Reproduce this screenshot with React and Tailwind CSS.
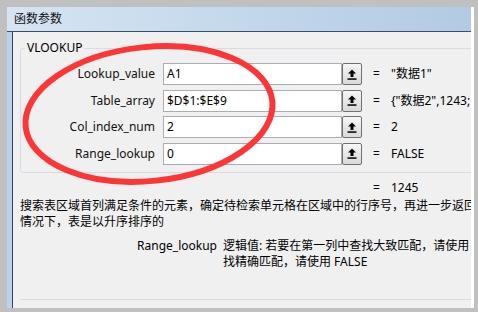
const rows = [
  { label: "Lookup_value", input: "A1", value: '"数据1"' },
  { label: "Table_array", input: "$D$1:$E$9", value: '{"数据2",1243;' },
  { label: "Col_index_num", input: "2", value: "2" },
  { label: "Range_lookup", input: "0", value: "FALSE" },
]

function PickButton() {
  return (
    <div className="w-[20px] h-[22px] shrink-0 border border-[#707070] rounded-[2px] bg-gradient-to-b from-[#f6f6f6] to-[#dadada] flex items-center justify-center">
      <svg width="10" height="11" viewBox="0 0 10 11">
        <path d="M5 0.5 L9 4.5 L6.5 4.5 L6.5 8 L3.5 8 L3.5 4.5 L1 4.5 Z" fill="#000" />
        <rect x="0.5" y="9.3" width="9" height="1.5" fill="#000" />
      </svg>
    </div>
  )
}

export default function App() {
  return (
    <div className="relative w-[478px] h-[312px] overflow-hidden bg-[#c0c0c0] pt-[7px] pl-[7px] font-['Noto_Sans','Noto_Sans_CJK_SC',sans-serif] text-[12px] text-black">
      <div className="flex">
        {/* dialog window */}
        <div className="w-[464px] h-[301px] flex flex-col overflow-hidden">
          {/* title bar */}
          <div className="h-[25px] shrink-0 bg-gradient-to-r from-[#d6e4f2] via-[#c4d8ec] to-[#b2cae3] border-b border-[#3e4e60] flex items-center pl-[7px]">
            <span className="leading-none text-[#111]">函数参数</span>
          </div>

          <div className="flex flex-1">
            <div className="w-[5px] bg-[#bad2ea] shrink-0" />
            <div className="w-px bg-[#33445a] shrink-0" />

            {/* content */}
            <div className="flex-1 bg-[#f0f0f0] overflow-hidden">
              {/* group box */}
              <div className="relative ml-[7px] mt-[16px] w-[480px] h-[125px] border border-[#d3dde7] rounded-[3px] pt-[14px]">
                <span className="absolute -top-[10px] left-[4px] px-[2px] bg-[#f0f0f0] leading-[18px]">VLOOKUP</span>
                <div className="flex flex-col gap-[4.5px]">
                  {rows.map((r) => (
                    <div key={r.label} className="flex items-center h-[22px]">
                      <div className="w-[134px] shrink-0 text-right whitespace-nowrap text-[#111]">{r.label}</div>
                      <div className="ml-[8px] w-[179px] shrink-0 h-[22px] border border-[#abadb3] bg-white pl-[3px] flex items-center whitespace-nowrap">
                        {r.input}
                      </div>
                      <PickButton />
                      <span className="ml-[11px] w-[18px] shrink-0">=</span>
                      <span className="whitespace-nowrap">{r.value}</span>
                    </div>
                  ))}
                </div>
              </div>

              {/* result */}
              <div className="mt-[7px] h-[16px] flex items-center pl-[360px]">
                <span className="w-[18px]">=</span>
                <span>1245</span>
              </div>

              {/* description */}
              <div className="mt-[2px] pl-[7px] leading-[16px]">
                <div className="whitespace-nowrap">
                  搜索表区域首列满足条件的元素，确定待检索单元格在区域中的行序号，再进一步返回
                </div>
                <div className="whitespace-nowrap">情况下，表是以升序排序的</div>
              </div>

              <div className="mt-[8px] flex leading-[16px]">
                <div className="w-[204px] text-right shrink-0">Range_lookup</div>
                <div className="ml-[6px]">
                  <div className="whitespace-nowrap">逻辑值: 若要在第一列中查找大致匹配，请使用</div>
                  <div className="whitespace-nowrap">找精确匹配，请使用 FALSE</div>
                </div>
              </div>

              <div className="mt-[29px] ml-[7px] h-px bg-[#d3dde9]" />
            </div>
          </div>
        </div>
        <div className="w-[3px] h-[301px] bg-white" />
      </div>

      {/* red marker ellipse drawn over the dialog */}
      <svg className="absolute left-0 top-0 pointer-events-none" width="478" height="312">
        <ellipse cx="149" cy="114" rx="124" ry="67" transform="rotate(-6 149 114)" fill="none" stroke="#fc3636" strokeWidth="6" />
      </svg>
    </div>
  )
}
